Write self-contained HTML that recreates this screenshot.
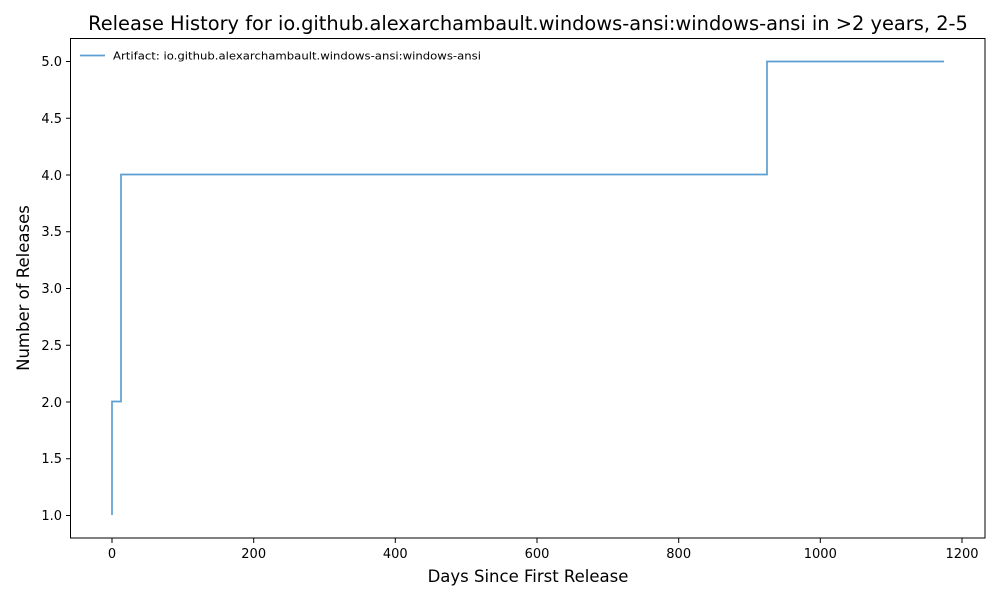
<!DOCTYPE html>
<html><head><meta charset="utf-8"><style>body{margin:0;background:#fff}svg{display:block}text{font-family:"DejaVu Sans","Liberation Sans",sans-serif;fill:#000}</style></head><body>
<svg width="1000" height="600" viewBox="0 0 1000 600">
<text x="528" y="30" font-size="19.4" text-anchor="middle">Release History for io.github.alexarchambault.windows-ansi:windows-ansi in &gt;2 years, 2-5</text>
<polyline fill="none" stroke="#5b9fd2" stroke-width="1.7" points="112,515 112,401.5 121,401.5 121,174.5 767,174.5 767,61.5 944,61.5"/>
<rect x="70.5" y="38.5" width="914.5" height="499.5" fill="none" stroke="#000" stroke-width="1"/>
<g stroke="#000" stroke-width="1">
<line x1="112" y1="538" x2="112" y2="543"/><line x1="253.7" y1="538" x2="253.7" y2="543"/><line x1="395.3" y1="538" x2="395.3" y2="543"/><line x1="537" y1="538" x2="537" y2="543"/><line x1="678.7" y1="538" x2="678.7" y2="543"/><line x1="820.3" y1="538" x2="820.3" y2="543"/><line x1="962" y1="538" x2="962" y2="543"/>
<line x1="66" y1="61.5" x2="70.5" y2="61.5"/><line x1="66" y1="118.25" x2="70.5" y2="118.25"/><line x1="66" y1="175" x2="70.5" y2="175"/><line x1="66" y1="231.75" x2="70.5" y2="231.75"/><line x1="66" y1="288.5" x2="70.5" y2="288.5"/><line x1="66" y1="345.25" x2="70.5" y2="345.25"/><line x1="66" y1="402" x2="70.5" y2="402"/><line x1="66" y1="458.75" x2="70.5" y2="458.75"/><line x1="66" y1="515.5" x2="70.5" y2="515.5"/>
</g>
<g font-size="13" text-anchor="middle">
<text x="112" y="558">0</text><text x="253.7" y="558">200</text><text x="395.3" y="558">400</text><text x="537" y="558">600</text><text x="678.7" y="558">800</text><text x="820.3" y="558">1000</text><text x="962" y="558">1200</text>
</g>
<g font-size="13" text-anchor="end">
<text x="62" y="66">5.0</text><text x="62" y="123">4.5</text><text x="62" y="180">4.0</text><text x="62" y="236">3.5</text><text x="62" y="293">3.0</text><text x="62" y="350">2.5</text><text x="62" y="407">2.0</text><text x="62" y="463">1.5</text><text x="62" y="520">1.0</text>
</g>
<text x="528" y="582" font-size="16.5" text-anchor="middle">Days Since First Release</text>
<text transform="translate(29,288) rotate(-90)" font-size="16.5" text-anchor="middle">Number of Releases</text>
<line x1="80" y1="55.5" x2="105" y2="55.5" stroke="#5b9fd2" stroke-width="1.7"/>
<text x="113" y="59.5" font-size="11" textLength="368" lengthAdjust="spacingAndGlyphs">Artifact: io.github.alexarchambault.windows-ansi:windows-ansi</text>
</svg>
</body></html>
